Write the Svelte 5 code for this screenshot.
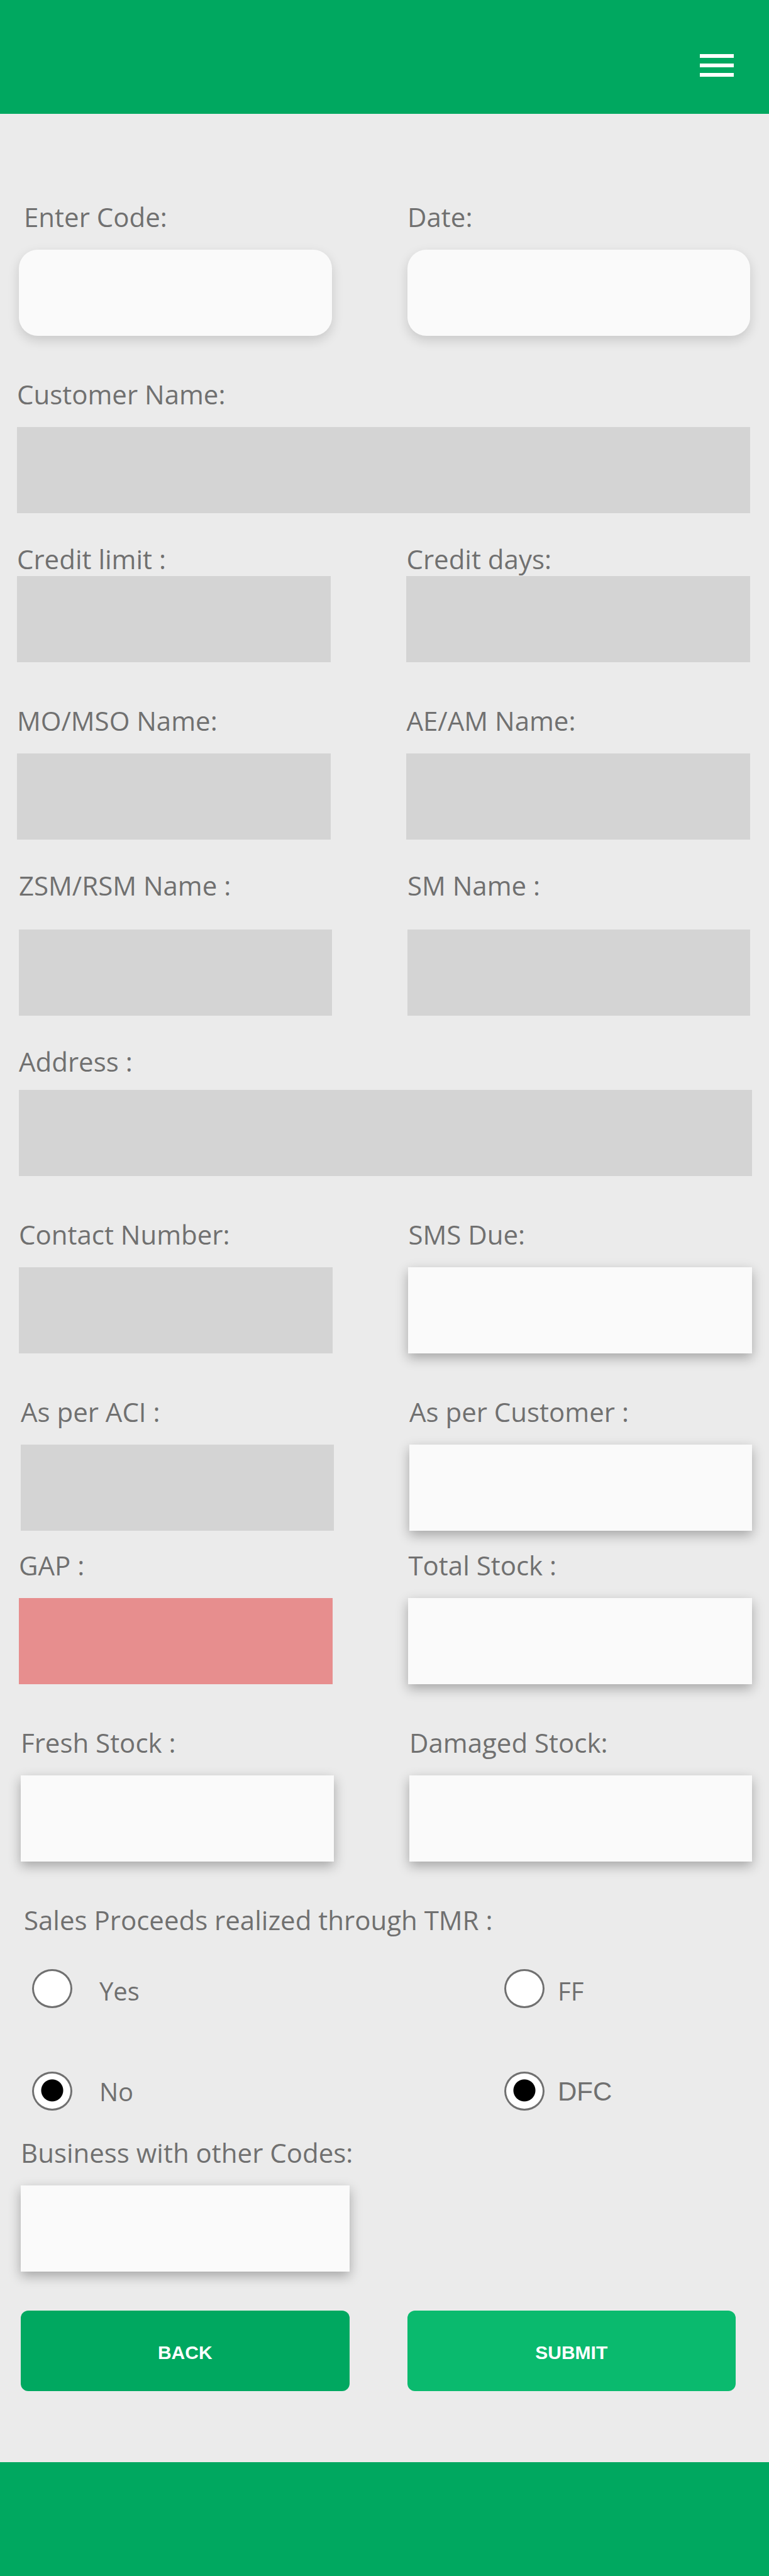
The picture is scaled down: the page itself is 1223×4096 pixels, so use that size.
<script>
  const rows = [
    { tone: 'inset', fields: [{ id: 'code', label: 'Enter Code:', kind: 'soft', indent: true }, { id: 'date', label: 'Date:', kind: 'soft' }] },
    { tone: 'outset', fields: [{ id: 'customer', label: 'Customer Name:', kind: 'locked' }] },
    { tone: 'outset', near: true, space: 'tight', fields: [{ id: 'limit', label: 'Credit limit :', kind: 'locked' }, { id: 'days', label: 'Credit days:', kind: 'locked' }] },
    { tone: 'outset', fields: [{ id: 'mo', label: 'MO/MSO Name:', kind: 'locked' }, { id: 'ae', label: 'AE/AM Name:', kind: 'locked' }] },
    { tone: 'inset', near: true, space: 'loose', fields: [{ id: 'zsm', label: 'ZSM/RSM Name :', kind: 'locked' }, { id: 'sm', label: 'SM Name :', kind: 'locked' }] },
    { tone: 'wide', near: true, space: 'snug', fields: [{ id: 'address', label: 'Address :', kind: 'locked' }] },
    { tone: 'wide', fields: [{ id: 'contact', label: 'Contact Number:', kind: 'locked' }, { id: 'sms', label: 'SMS Due:', kind: 'raised' }] },
    { tone: 'shifted', fields: [{ id: 'aci', label: 'As per ACI :', kind: 'locked' }, { id: 'percust', label: 'As per Customer :', kind: 'raised' }] },
    { tone: 'wide', close: true, fields: [{ id: 'gap', label: 'GAP :', kind: 'alert' }, { id: 'total', label: 'Total Stock :', kind: 'raised' }] },
    { tone: 'shifted', fields: [{ id: 'fresh', label: 'Fresh Stock :', kind: 'raised' }, { id: 'damaged', label: 'Damaged Stock:', kind: 'raised' }] }
  ];
  let proceeds = $state('no');
  let channel = $state('dfc');
</script>

<div class="page">
  <header class="bar">
    <button class="menu" type="button" aria-label="Menu">
      <svg viewBox="0 0 54 36" aria-hidden="true"><path d="M0 0h54v6H0zM0 15h54v6H0zM0 30h54v6H0z" /></svg>
    </button>
  </header>

  <form onsubmit={(e) => e.preventDefault()}>
    {#each rows as row}
      <div class="row {row.tone} {row.space ?? ''}" class:near={row.near} class:close={row.close} class:single={row.fields.length === 1}>
        {#each row.fields as field}
          <div class="field">
            <label class:indent={field.indent} for={field.id}>{field.label}</label>
            <input id={field.id} class={field.kind} type="text" readonly={field.kind === 'locked' || field.kind === 'alert'} />
          </div>
        {/each}
      </div>
    {/each}

    <fieldset>
      <legend>Sales Proceeds realized through TMR :</legend>
      <div class="choices">
        <label class="choice upper"><input type="radio" name="proceeds" value="yes" bind:group={proceeds} /><span>Yes</span></label>
        <label class="choice upper channel"><input type="radio" name="channel" value="ff" bind:group={channel} /><span>FF</span></label>
        <label class="choice"><input type="radio" name="proceeds" value="no" bind:group={proceeds} /><span>No</span></label>
        <label class="choice channel plain"><input type="radio" name="channel" value="dfc" bind:group={channel} /><span>DFC</span></label>
      </div>
    </fieldset>

    <div class="pair">
      <div class="field">
        <label for="business">Business with other Codes:</label>
        <input id="business" class="raised" type="text" />
      </div>
    </div>

    <div class="pair actions">
      <button class="back" type="button">BACK</button>
      <button class="submit" type="submit">SUBMIT</button>
    </div>
  </form>

  <footer class="bar"></footer>
</div>

<style>
  :global(body) {
    margin: 0;
    background: #ebebeb;
  }
  .page {
    color: #707070;
    font-family: 'Open Sans', 'Noto Sans', sans-serif;
    font-size: 42px;
    line-height: 52px;
  }
  .bar {
    display: flex;
    justify-content: flex-end;
    box-sizing: border-box;
    height: 181px;
    padding: 86px 56px 0;
    background: #00a860;
  }
  .menu {
    width: 54px;
    height: 36px;
    padding: 0;
    border: 0;
    background: none;
    cursor: pointer;
  }
  .menu svg {
    display: block;
    fill: #fff;
  }
  form {
    padding: 138px 0 113px;
  }
  .row {
    display: grid;
    grid-template-columns: 499fr 546fr;
    column-gap: 120px;
    margin-top: 67px;
  }
  .row:first-child {
    margin-top: 0;
  }
  .single {
    grid-template-columns: 1fr;
  }
  .near {
    margin-top: 47px;
  }
  .close {
    margin-top: 29px;
  }
  .outset {
    padding: 0 30px 0 27px;
  }
  .inset {
    padding: 0 30px;
  }
  .wide {
    padding: 0 27px 0 30px;
  }
  .shifted {
    padding: 0 27px 0 33px;
  }
  .field {
    display: flex;
    flex-direction: column;
    gap: 26px;
    min-width: 0;
  }
  .tight .field {
    gap: 1px;
  }
  .snug .field {
    gap: 19px;
  }
  .loose .field {
    gap: 44px;
  }
  .field label {
    white-space: nowrap;
  }
  .field .indent {
    padding-left: 8px;
  }
  .field input {
    box-sizing: border-box;
    width: 100%;
    height: 137px;
    padding: 0 24px;
    border: 0;
    border-radius: 0;
    outline-offset: 2px;
    background: #fafafa;
    color: inherit;
    font: inherit;
  }
  .field .locked {
    background: #d4d4d4;
  }
  .field .alert {
    background: #e78e8e;
  }
  .field .raised {
    box-shadow: 0 7px 18px rgba(0, 0, 0, 0.3);
  }
  .field .soft {
    border-radius: 30px;
    box-shadow: 0 7px 18px rgba(0, 0, 0, 0.15);
  }
  fieldset {
    min-width: 0;
    margin: 67px 0 0;
    padding: 0;
    border: 0;
  }
  legend {
    padding: 0 0 0 38px;
  }
  .choices {
    display: grid;
    grid-template-columns: 751fr 370fr;
    row-gap: 101px;
    padding: 52px 51px 0;
  }
  .choice {
    display: flex;
    align-items: center;
    gap: 43px;
    height: 62px;
    font-size: 40px;
  }
  .choice span {
    padding-top: 2px;
  }
  .upper span {
    padding-top: 8px;
  }
  .channel {
    gap: 21px;
  }
  .choice input {
    appearance: none;
    box-sizing: border-box;
    flex: none;
    width: 64px;
    height: 62px;
    margin: 0;
    border: 3px solid #707070;
    border-radius: 50%;
    background: #fff;
  }
  .choice input:checked {
    background: radial-gradient(circle at 50% 48%, #000 17px, #fff 18px);
  }
  .plain {
    font-family: 'Liberation Sans', Arial, sans-serif;
    font-size: 42px;
  }
  .pair {
    display: grid;
    grid-template-columns: 1fr 1fr;
    column-gap: 92px;
    margin-top: 41px;
    padding: 0 53px 0 33px;
  }
  .actions {
    margin-top: 62px;
  }
  .actions button {
    height: 128px;
    padding: 6px 0 0;
    border: 0;
    border-radius: 12px;
    color: #fff;
    font: bold 30px/36px 'Liberation Sans', Arial, sans-serif;
    cursor: pointer;
  }
  .actions .back {
    background: #00a860;
  }
  .actions .submit {
    background: #0aba6e;
  }
</style>
